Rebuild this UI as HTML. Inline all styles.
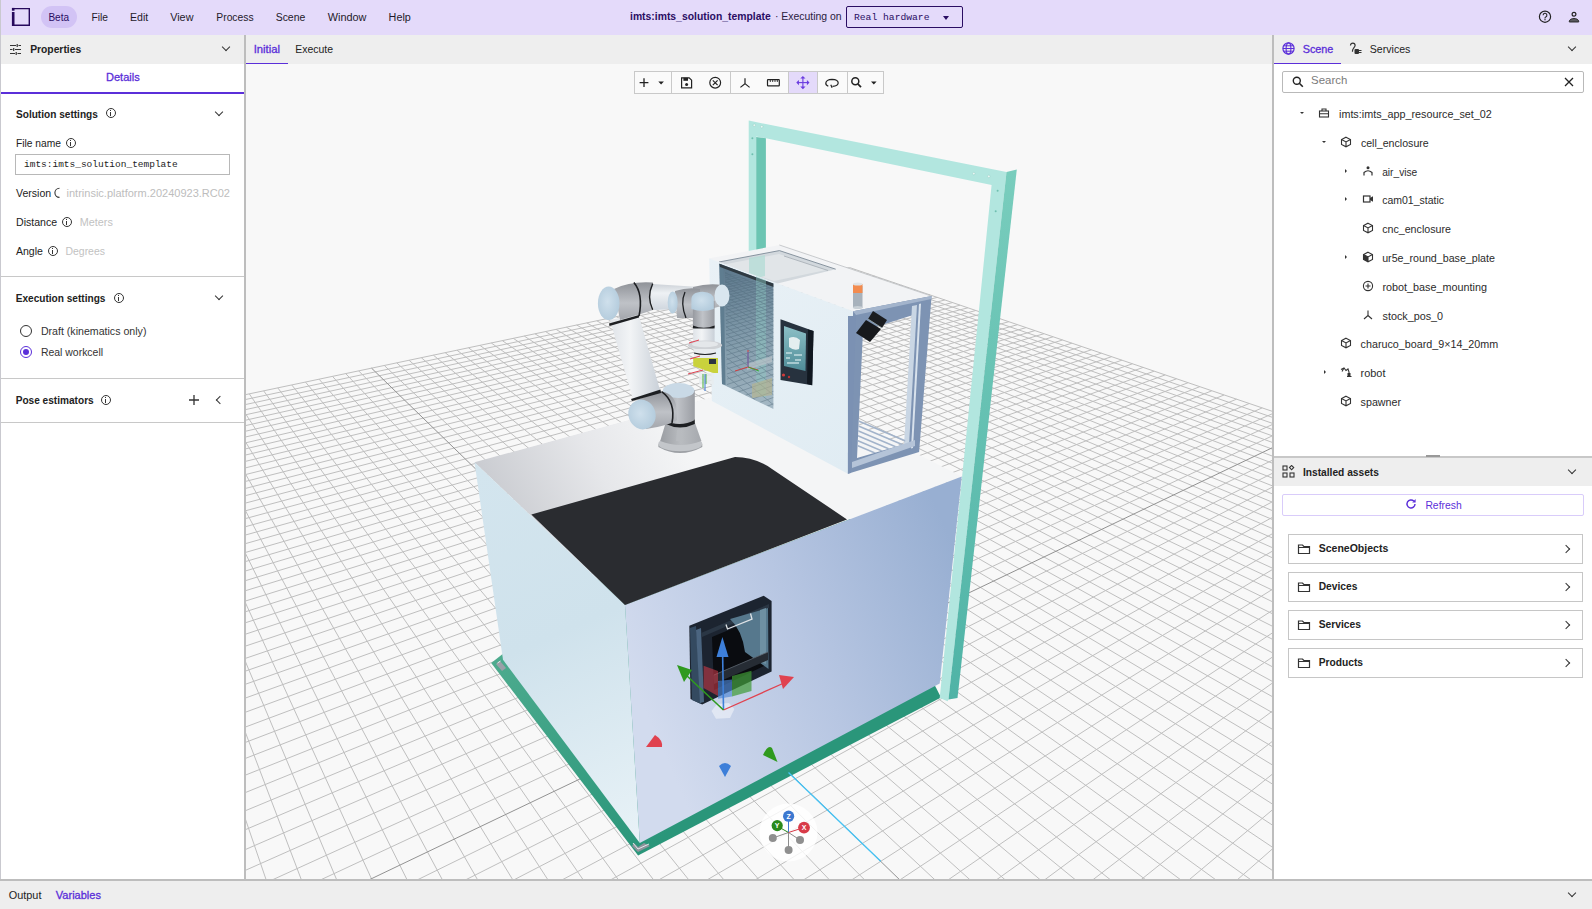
<!DOCTYPE html>
<html><head><meta charset="utf-8">
<style>
*{box-sizing:border-box;margin:0;padding:0}
html,body{width:1592px;height:909px;overflow:hidden;background:#fff;font-family:"Liberation Sans",sans-serif;color:#1f1f1f}
.a{position:absolute;white-space:nowrap}
#top{position:absolute;left:0;top:0;width:1592px;height:35px;background:#e4dafa}
.menu{font-size:10.6px;color:#1f1a2a;top:13px;line-height:10px}
#lp{position:absolute;left:0;top:35px;width:244px;height:844px;background:#fff}
.hdr{position:absolute;top:35px;height:29px;background:#eeeeee}
.vb{position:absolute;background:#bdbdbd}
.t11{font-size:10.6px;line-height:12px}
.b{font-weight:bold}
.pur{color:#5b2fd9}
.gray{color:#b9b9b9}
.info{position:absolute;width:10px;height:10px;border:1.1px solid #333;border-radius:50%}
.info:after{content:"";position:absolute;left:3.3px;top:3.2px;width:1.2px;height:3.6px;background:#333}
.info:before{content:"";position:absolute;left:3.3px;top:1.2px;width:1.2px;height:1.2px;background:#333}
.chev{position:absolute;width:6px;height:6px;border-right:1.5px solid #333;border-bottom:1.5px solid #333;transform:rotate(45deg)}
.hl{position:absolute;height:1px;background:#c8c8c8}
.tree{font-size:10.6px;color:#2b2b2b;line-height:12px}
.card{position:absolute;left:1288px;width:295px;height:30px;border:1px solid #c6c6c6;background:#fff}
.card .a{font-size:10.8px;font-weight:bold;color:#222;top:9px;left:29px;line-height:12px}
</style></head><body>

<!-- TOP BAR -->
<div id="top">
  <svg class="a" style="left:11px;top:7px" width="21" height="21" viewBox="0 0 21 21">
    <path d="M1.6 1.6H18.3V18.3H1.6" fill="none" stroke="#26095c" stroke-width="1.4"/>
    <rect x="0.9" y="0.9" width="2.6" height="2.8" fill="#26095c"/>
    <rect x="0.9" y="5" width="2.6" height="14" fill="#26095c"/>
  </svg>
  <div class="a" style="left:41px;top:6px;width:36px;height:22px;border-radius:11px;background:#d2c3f5"></div>

  <div class="a" style="left:846px;top:6px;width:117px;height:22px;border:1px solid #2a0d63;border-radius:2px"></div>
  <div class="a" style="left:943px;top:16px;width:0;height:0;border-left:3.5px solid transparent;border-right:3.5px solid transparent;border-top:4px solid #2a0d63"></div>

  <svg class="a" style="left:1537px;top:9px" width="16" height="16" viewBox="0 0 16 16">
    <circle cx="8" cy="7.7" r="5.6" fill="none" stroke="#222" stroke-width="1.2"/>
    <path d="M6.1 6.2a1.9 1.9 0 1 1 2.7 1.7c-.5.3-.8.6-.8 1.2v.3" fill="none" stroke="#222" stroke-width="1.1"/>
    <rect x="7.4" y="10.1" width="1.2" height="1.2" fill="#222"/>
  </svg>
  <svg class="a" style="left:1566px;top:9px" width="16" height="16" viewBox="0 0 16 16">
    <circle cx="8" cy="5.3" r="1.9" fill="none" stroke="#222" stroke-width="1.2"/>
    <path d="M3.3 13V12.3C3.3 10.6 6 9.4 8 9.4S12.7 10.6 12.7 12.3V13Z" fill="#5a5a5e" stroke="#222" stroke-width="0.9"/>
  </svg>
</div>

<!-- LEFT PANEL -->
<div id="lp"></div>
<div class="hdr" style="left:0;width:244px"></div>
<svg class="a" style="left:9px;top:43px" width="13" height="13" viewBox="0 0 13 13">
  <path d="M1 2.5h6M9.5 2.5h2.5M1 6.5h2.5M6 6.5h6M1 10.5h5M8.5 10.5h3.5" stroke="#333" stroke-width="1.2"/>
  <path d="M8.2 1v3M4.7 5v3M7.2 9v3" stroke="#333" stroke-width="1.2"/>
</svg>
<div class="chev" style="left:223px;top:44px"></div>

<div class="a" style="left:0;top:92px;width:244px;height:1.5px;background:#5b2fd9"></div>

<div class="info" style="left:106px;top:108px"></div>
<div class="chev" style="left:216px;top:109px"></div>

<div class="info" style="left:66px;top:138px"></div>
<div class="a" style="left:15px;top:154px;width:215px;height:21px;border:1px solid #b8b8b8;background:#fff"></div>

<div class="info" style="left:62px;top:217px"></div>
<div class="info" style="left:48px;top:246px"></div>

<div class="hl" style="left:0;top:276px;width:244px"></div>

<div class="info" style="left:114px;top:293px"></div>
<div class="chev" style="left:216px;top:293px"></div>

<div class="a" style="left:20px;top:325px;width:12px;height:12px;border:1.2px solid #333;border-radius:50%"></div>
<div class="a" style="left:20px;top:346px;width:12px;height:12px;border:1.2px solid #5b2fd9;border-radius:50%"></div>
<div class="a" style="left:23px;top:349px;width:6px;height:6px;background:#5b2fd9;border-radius:50%"></div>

<div class="hl" style="left:0;top:378px;width:244px"></div>
<div class="info" style="left:101px;top:395px"></div>
<svg class="a" style="left:188px;top:394px" width="12" height="12" viewBox="0 0 12 12"><path d="M6 1v10M1 6h10" stroke="#333" stroke-width="1.3"/></svg>
<div class="chev" style="left:217px;top:397px;transform:rotate(135deg)"></div>
<div class="hl" style="left:0;top:422px;width:244px"></div>

<div class="vb" style="left:244px;top:35px;width:2px;height:846px"></div>

<!-- VIEWPORT -->
<div class="hdr" style="left:246px;width:1026px"></div>
<div class="a" style="left:246px;top:63px;width:42px;height:1px;background:#5b2fd9"></div>

<div class="a" style="left:246px;top:64px;width:1026px;height:815px;background:#f8f8f8;overflow:hidden">
<svg width="1026" height="815" viewBox="246 64 1026 815" style="position:absolute;left:0;top:0">
<defs>
<linearGradient id="gTop" x1="490" y1="490" x2="660" y2="400" gradientUnits="userSpaceOnUse">
 <stop offset="0" stop-color="#caccd1"/><stop offset="0.55" stop-color="#e6e7ea"/><stop offset="1" stop-color="#f4f5f6"/></linearGradient>
<linearGradient id="gLeft" x1="480" y1="470" x2="640" y2="840" gradientUnits="userSpaceOnUse">
 <stop offset="0" stop-color="#d3e5ee"/><stop offset="0.45" stop-color="#cfe2ec"/><stop offset="1" stop-color="#e8f2f7"/></linearGradient>
<linearGradient id="gFront" x1="640" y1="700" x2="960" y2="560" gradientUnits="userSpaceOnUse">
 <stop offset="0" stop-color="#d2dbee"/><stop offset="0.5" stop-color="#b7c6e2"/><stop offset="1" stop-color="#98afd2"/></linearGradient>
<linearGradient id="gPlate" x1="490" y1="660" x2="640" y2="855" gradientUnits="userSpaceOnUse">
 <stop offset="0" stop-color="#4dab8e"/><stop offset="1" stop-color="#2a967a"/></linearGradient>
<linearGradient id="gPostR" x1="0" y1="170" x2="0" y2="700" gradientUnits="userSpaceOnUse">
 <stop offset="0" stop-color="#79cdbd"/><stop offset="1" stop-color="#4fb3a6"/></linearGradient>
<linearGradient id="gCncF" x1="710" y1="260" x2="850" y2="470" gradientUnits="userSpaceOnUse">
 <stop offset="0" stop-color="#e9f1f6"/><stop offset="1" stop-color="#e0ecf3"/></linearGradient>
<linearGradient id="gGray" x1="0" y1="0" x2="1" y2="1">
 <stop offset="0" stop-color="#a9abb0"/><stop offset="1" stop-color="#7e8085"/></linearGradient>
<linearGradient id="gGlass" x1="720" y1="270" x2="773" y2="400" gradientUnits="userSpaceOnUse">
 <stop offset="0" stop-color="#5d788c"/><stop offset="0.45" stop-color="#7e98a8"/><stop offset="1" stop-color="#a3b7c3"/></linearGradient>
<linearGradient id="gCylV" x1="0" y1="0" x2="1" y2="0">
 <stop offset="0" stop-color="#979aa0"/><stop offset="0.45" stop-color="#c0c3c8"/><stop offset="1" stop-color="#9a9da3"/></linearGradient>
<linearGradient id="gCylH" x1="0" y1="0" x2="0" y2="1">
 <stop offset="0" stop-color="#8f9298"/><stop offset="0.55" stop-color="#bfc2c7"/><stop offset="1" stop-color="#a3a6ac"/></linearGradient>
<linearGradient id="gBase" x1="0" y1="0" x2="1" y2="0">
 <stop offset="0" stop-color="#9a9da2"/><stop offset="0.5" stop-color="#b9bcc0"/><stop offset="1" stop-color="#a6a9ae"/></linearGradient>
<linearGradient id="gTube" x1="0" y1="0" x2="1" y2="0">
 <stop offset="0" stop-color="#dfe3e8"/><stop offset="0.4" stop-color="#f2f4f6"/><stop offset="1" stop-color="#c9d0d8"/></linearGradient>
<linearGradient id="gTube2" x1="0" y1="0" x2="0" y2="1">
 <stop offset="0" stop-color="#cdd2d8"/><stop offset="0.35" stop-color="#eef1f4"/><stop offset="1" stop-color="#cfd6de"/></linearGradient>
<radialGradient id="gCap" cx="0.45" cy="0.45" r="0.6">
 <stop offset="0" stop-color="#cfe0ec"/><stop offset="1" stop-color="#b3cbdc"/></radialGradient>
<linearGradient id="gScreen" x1="0" y1="0" x2="0" y2="1">
 <stop offset="0" stop-color="#8cbfc6"/><stop offset="1" stop-color="#4f8c98"/></linearGradient>
</defs>
<path d="M-22168.6 24763.8L-588.8 570.1M15809.2 24847.5L2799.3 930.7M-21211.9 24765.9L-560.2 564.1M14504.4 24844.6L2738.7 910.1M-20255.3 24768.0L-532.2 558.2M13199.6 24841.7L2680.7 890.4M-19298.6 24770.1L-504.7 552.4M11894.8 24838.8L2625.0 871.4M-18342.0 24772.2L-477.7 546.8M10590.0 24836.0L2571.6 853.2M-17385.3 24774.4L-451.3 541.2M9285.3 24833.1L2520.2 835.8M-16428.7 24776.5L-425.3 535.8M7980.5 24830.2L2470.8 819.0M-15472.0 24778.6L-399.9 530.4M6675.7 24827.4L2423.3 802.8M-14515.4 24780.7L-374.9 525.2M5370.9 24824.5L2377.6 787.3M-13558.7 24782.8L-350.4 520.0M4066.1 24821.6L2333.5 772.3M-12602.1 24784.9L-326.3 514.9M2761.3 24818.7L2291.0 757.8M-11645.4 24787.0L-302.7 510.0M1456.5 24815.9L2249.9 743.9M-10688.8 24789.1L-279.5 505.1M151.7 24813.0L2210.3 730.4M-9732.1 24791.2L-256.7 500.3M-1153.1 24810.1L2172.1 717.4M-8775.4 24793.3L-234.3 495.6M-2457.9 24807.2L2135.1 704.8M-7818.8 24795.4L-212.3 491.0M-3762.7 24804.4L2099.3 692.6M-6862.1 24797.5L-190.7 486.4M-5067.4 24801.5L2064.7 680.9M-5905.5 24799.6L-169.5 482.0M-6372.2 24798.6L2031.2 669.5M-4948.8 24801.7L-148.6 477.6M-7677.0 24795.7L1998.7 658.4M-3992.2 24803.9L-128.1 473.2M-8981.8 24792.9L1967.2 647.7M-3035.5 24806.0L-107.9 469.0M-10286.6 24790.0L1936.7 637.3M-2078.9 24808.1L-88.1 464.8M-11591.4 24787.1L1907.1 627.3M-1122.2 24810.2L-68.5 460.7M-12896.2 24784.2L1878.3 617.5M-165.6 24812.3L-49.3 456.7M-14201.0 24781.4L1850.4 608.0M791.1 24814.4L-30.5 452.7M-15505.8 24778.5L1823.3 598.8M1747.7 24816.5L-11.9 448.8M-16810.6 24775.6L1797.0 589.8M2704.4 24818.6L6.4 445.0M-18115.3 24772.7L1771.4 581.1M3661.0 24820.7L24.4 441.2M-19420.1 24769.9L1746.4 572.6M4617.7 24822.8L42.1 437.5M-20724.9 24767.0L1722.2 564.4M5574.3 24824.9L59.5 433.8M-22029.7 24764.1L1698.6 556.4M6531.0 24827.0L76.7 430.2M-14774.8 16474.5L1675.6 548.5M7487.6 24829.1L93.6 426.6M-10765.7 11979.7L1653.3 540.9M8444.3 24831.2L110.2 423.1M-8472.2 9408.5L1631.5 533.5M9400.9 24833.4L126.6 419.7M-6987.2 7743.6L1610.2 526.3M10357.6 24835.5L142.8 416.3M-5947.3 6577.7L1589.5 519.2M11314.2 24837.6L158.7 412.9M-5178.4 5715.6L1569.3 512.4M12270.9 24839.7L174.3 409.7M-4586.7 5052.3L1549.6 505.7M13227.5 24841.8L189.8 406.4M-4117.5 4526.2L1530.4 499.1M14184.2 24843.9L205.0 403.2M-3736.1 4098.7L1511.6 492.7M15140.8 24846.0L220.0 400.1M-3420.1 3744.4L1493.2 486.5M14315.0 22100.5L234.7 397.0M-3153.9 3446.0L1475.3 480.4M11086.4 16165.3L249.3 393.9M-2926.7 3191.2L1457.8 474.5M9223.3 12740.2L263.7 390.9M-2730.4 2971.2L1440.7 468.6M8010.6 10510.8L277.8 387.9M-2559.2 2779.2L1424.0 463.0M7158.3 8944.0L291.8 385.0M-2408.6 2610.3L1407.7 457.4M6526.5 7782.7L305.5 382.1M-2274.9 2460.5L1391.7 452.0M6039.5 6887.4L319.1 379.2M-2155.6 2326.7L1376.0 446.6M5652.7 6176.2L332.5 376.4M-2048.4 2206.6L1360.7 441.4M5337.9 5597.5L345.7 373.6M-1951.6 2098.0L1345.8 436.3M5076.8 5117.5L358.7 370.9M-1863.8 1999.5L1331.1 431.4M4668.7 4367.3L384.3 365.5M-1710.3 1827.4L1302.7 421.7M4506.2 4068.6L396.8 362.9M-1642.9 1751.9L1288.9 417.0M4364.4 3807.9L409.1 360.3M-1580.7 1682.2L1275.4 412.4M4239.5 3578.4L421.3 357.7M-1523.2 1617.7L1262.2 407.9M4128.8 3374.7L433.4 355.2M-1469.9 1557.9L1249.2 403.5M4029.8 3192.8L445.2 352.7M-1420.2 1502.3L1236.5 399.2M3940.9 3029.3L457.0 350.2M-1374.0 1450.4L1224.0 395.0M3860.6 2881.7L468.5 347.8M-1330.7 1401.9L1211.8 390.8M3787.6 2747.6L480.0 345.4M-1290.2 1356.5L1199.8 386.7M3721.1 2625.3L491.3 343.0M-1252.1 1313.8L1188.1 382.7M3660.2 2513.3L502.4 340.7M-1216.3 1273.7L1176.5 378.8M3604.2 2410.3L513.4 338.4M-1182.6 1235.9L1165.2 374.9M3552.5 2315.4L524.3 336.1M-1150.8 1200.2L1154.1 371.2M3504.8 2227.6L535.0 333.8M-1120.7 1166.4L1143.2 367.4M3460.4 2146.1L545.6 331.6M-1092.2 1134.5L1132.4 363.8M3419.2 2070.3L556.1 329.4M-1065.1 1104.2L1121.9 360.2M3380.7 1999.5L566.4 327.2M-1039.5 1075.4L1111.6 356.7M3344.7 1933.4L576.7 325.0M-1015.1 1048.0L1101.4 353.2M3311.0 1871.5L586.8 322.9M-991.9 1022.0L1091.4 349.8M3279.4 1813.3L596.8 320.8M-969.7 997.2L1081.6 346.5M3249.6 1758.6L606.6 318.7M-948.6 973.5L1071.9 343.2M3221.6 1707.0L616.4 316.7M-928.4 950.9L1062.5 340.0M3195.1 1658.3L626.0 314.7M-909.1 929.2L1053.1 336.8M3170.1 1612.3L635.5 312.7M-890.6 908.5L1044.0 333.7M3146.4 1568.7L645.0 310.7M-872.9 888.7L1035.0 330.6M3123.9 1527.4L654.3 308.7M-856.0 869.7L1026.1 327.6M3102.5 1488.1L663.5 306.8M-839.7 851.4L1017.4 324.7M3082.2 1450.8L672.6 304.9M-824.0 833.9L1008.8 321.7M3062.9 1415.3L681.6 303.0M-809.0 817.0L1000.3 318.9M3044.5 1381.4L690.5 301.1M-794.5 800.8L992.0 316.0M3026.9 1349.1L699.3 299.3M-780.6 785.2L983.8 313.3M3010.1 1318.2L708.0 297.4M-767.2 770.1L975.8 310.5M2994.0 1288.7L716.6 295.6M-754.2 755.6L967.9 307.8M2978.6 1260.4L725.1 293.8M-741.8 741.6L960.0 305.2M2963.9 1233.3L733.5 292.1M-729.7 728.1L952.4 302.6M2949.8 1207.3L741.9 290.3M-718.1 715.1L944.8 300.0M2936.2 1182.4L750.1 288.6M-706.8 702.5L937.3 297.4M2923.2 1158.5L758.2 286.9M-696.0 690.3L930.0 294.9M2910.7 1135.5L766.3 285.2M-685.4 678.5L922.7 292.5M2898.6 1113.3L774.3 283.5M-675.3 667.1L915.6 290.1M2887.0 1092.0L782.2 281.8M-665.4 656.0L908.6 287.7M2875.9 1071.4L790.0 280.2M-655.8 645.3L901.7 285.3M2865.1 1051.6L797.7 278.6M-646.6 634.9L894.8 283.0M2854.7 1032.5L805.4 277.0M-637.6 624.8L888.1 280.7M2844.7 1014.1L813.0 275.4M-628.8 615.0L881.5 278.5M2835.0 996.3L820.5 273.8M-620.4 605.5L874.9 276.2M2825.6 979.1L827.9 272.2M-612.1 596.3L868.5 274.0M2816.6 962.4L835.2 270.7M-604.1 587.3L862.1 271.9M2807.8 946.3L842.5 269.2M-596.4 578.6L855.9 269.7M2799.3 930.7L849.7 267.6M-588.8 570.1L849.7 267.6" stroke="#bfbfbf" stroke-width="1.0" fill="none"/><path d="M4856.7 4713.0L371.6 368.2M-1783.6 1909.7L1316.7 426.5" stroke="#929292" stroke-width="1.0" fill="none"/>
<polygon points="491.2,663.1 638.1,855.5 941,697.5 800,420" fill="url(#gPlate)"/>
<polygon points="474.5,462.3 772.7,380.7 961.8,476.6 625,605" fill="url(#gTop)"/>
<polygon points="474.5,462.3 625,605 639.8,843 503,659.8" fill="url(#gLeft)"/>
<polygon points="625,605 961.8,476.6 939.7,683.4 639.8,843" fill="url(#gFront)"/>
<path d="M496 664L500 661L506 668L502 671Z" fill="#9aa0a8"/><path d="M497.5 663L500.5 661" stroke="#e6e8ea" stroke-width="1"/>
<path d="M632 846L638 852L650 846L644 843L638 847L634 843Z" fill="#8e949c"/><path d="M633 843L638 849L649 844" stroke="#eef0f2" stroke-width="0.9" fill="none"/>
<path d="M531.3 514.5L625 605L847 519.4L772 469Q755 457 735 457Z" fill="#2a2c30"/>
<polygon points="748.7,120.6 1006.5,172 948.5,699.5 947.6,701.2 939.7,697.9 991.6,185.1 765.9,138.3 756.2,136.4 756.2,320 748.7,320" fill="#b2e6df"/>
<polygon points="1006.5,172 1016.8,169.6 957.5,698 948.5,699.5" fill="url(#gPostR)"/>
<polygon points="756.2,137 765.9,138.3 765.9,320 756.2,320" fill="#6cc5b3"/>
<g fill="#e9f6f3" stroke="#93cfc4" stroke-width="0.5"><circle cx="754.3" cy="125.2" r="1.3"/><circle cx="761.7" cy="126.7" r="1.3"/><circle cx="973.8" cy="173.6" r="1.3"/><circle cx="988.8" cy="176.4" r="1.3"/></g>
<g fill="#6fbfb0"><circle cx="997.6" cy="190.7" r="1"/><circle cx="995.7" cy="211.3" r="1"/><circle cx="752.4" cy="138.3" r="1"/><circle cx="752.4" cy="154.2" r="1"/></g>
<polygon points="708.5,258.6 779.4,245 931.6,296.1 853.1,311.3" fill="#f2f3f5"/>
<path d="M779.4 245L931.6 296.1" stroke="#b4b8bc" stroke-width="0.7"/>
<polygon points="719,262 779.4,250.6 835.7,269.2 774.4,284.2" fill="#d2d8dd"/>
<polygon points="724,264.5 779,254 826,270 774,281" fill="#e1e5e8"/>
<polygon points="749,258 765,255 765,276 749,280" fill="#b5dcd6" fill-opacity="0.8"/>
<path d="M719 262L779.4 250.6L835.7 269.2" stroke="#7d8a96" stroke-width="0.9" fill="none"/>
<path d="M784 256L828 270.5" stroke="#a3abb2" stroke-width="0.8" fill="none"/>
<polygon points="709.2,258.5 853.1,311.3 847.9,473.7 711.9,401" fill="url(#gCncF)"/>
<polygon points="719.4,263.8 773.4,283.6 773.4,409 722,383.9" fill="url(#gGlass)"/>
<polygon points="719.4,263.8 723.5,265.3 725.5,385 722,383.9" fill="#5f7d90"/>
<polygon points="719.4,263.8 773.4,283.6 773.4,287 720,267" fill="#2f3a42"/>
<polygon points="756,276 766,280 766,398 756,393" fill="#8fc9c4" fill-opacity="0.45"/>
<clipPath id="cWin"><polygon points="725,272 773.4,287 773.4,409 727,386"/></clipPath>
<g clip-path="url(#cWin)" opacity="0.55"><g transform="translate(395 95) scale(0.55)"><path d="M-22168.6 24763.8L-588.8 570.1M15809.2 24847.5L2799.3 930.7M-21211.9 24765.9L-560.2 564.1M14504.4 24844.6L2738.7 910.1M-20255.3 24768.0L-532.2 558.2M13199.6 24841.7L2680.7 890.4M-19298.6 24770.1L-504.7 552.4M11894.8 24838.8L2625.0 871.4M-18342.0 24772.2L-477.7 546.8M10590.0 24836.0L2571.6 853.2M-17385.3 24774.4L-451.3 541.2M9285.3 24833.1L2520.2 835.8M-16428.7 24776.5L-425.3 535.8M7980.5 24830.2L2470.8 819.0M-15472.0 24778.6L-399.9 530.4M6675.7 24827.4L2423.3 802.8M-14515.4 24780.7L-374.9 525.2M5370.9 24824.5L2377.6 787.3M-13558.7 24782.8L-350.4 520.0M4066.1 24821.6L2333.5 772.3M-12602.1 24784.9L-326.3 514.9M2761.3 24818.7L2291.0 757.8M-11645.4 24787.0L-302.7 510.0M1456.5 24815.9L2249.9 743.9M-10688.8 24789.1L-279.5 505.1M151.7 24813.0L2210.3 730.4M-9732.1 24791.2L-256.7 500.3M-1153.1 24810.1L2172.1 717.4M-8775.4 24793.3L-234.3 495.6M-2457.9 24807.2L2135.1 704.8M-7818.8 24795.4L-212.3 491.0M-3762.7 24804.4L2099.3 692.6M-6862.1 24797.5L-190.7 486.4M-5067.4 24801.5L2064.7 680.9M-5905.5 24799.6L-169.5 482.0M-6372.2 24798.6L2031.2 669.5M-4948.8 24801.7L-148.6 477.6M-7677.0 24795.7L1998.7 658.4M-3992.2 24803.9L-128.1 473.2M-8981.8 24792.9L1967.2 647.7M-3035.5 24806.0L-107.9 469.0M-10286.6 24790.0L1936.7 637.3M-2078.9 24808.1L-88.1 464.8M-11591.4 24787.1L1907.1 627.3M-1122.2 24810.2L-68.5 460.7M-12896.2 24784.2L1878.3 617.5M-165.6 24812.3L-49.3 456.7M-14201.0 24781.4L1850.4 608.0M791.1 24814.4L-30.5 452.7M-15505.8 24778.5L1823.3 598.8M1747.7 24816.5L-11.9 448.8M-16810.6 24775.6L1797.0 589.8M2704.4 24818.6L6.4 445.0M-18115.3 24772.7L1771.4 581.1M3661.0 24820.7L24.4 441.2M-19420.1 24769.9L1746.4 572.6M4617.7 24822.8L42.1 437.5M-20724.9 24767.0L1722.2 564.4M5574.3 24824.9L59.5 433.8M-22029.7 24764.1L1698.6 556.4M6531.0 24827.0L76.7 430.2M-14774.8 16474.5L1675.6 548.5M7487.6 24829.1L93.6 426.6M-10765.7 11979.7L1653.3 540.9M8444.3 24831.2L110.2 423.1M-8472.2 9408.5L1631.5 533.5M9400.9 24833.4L126.6 419.7M-6987.2 7743.6L1610.2 526.3M10357.6 24835.5L142.8 416.3M-5947.3 6577.7L1589.5 519.2M11314.2 24837.6L158.7 412.9M-5178.4 5715.6L1569.3 512.4M12270.9 24839.7L174.3 409.7M-4586.7 5052.3L1549.6 505.7M13227.5 24841.8L189.8 406.4M-4117.5 4526.2L1530.4 499.1M14184.2 24843.9L205.0 403.2M-3736.1 4098.7L1511.6 492.7M15140.8 24846.0L220.0 400.1M-3420.1 3744.4L1493.2 486.5M14315.0 22100.5L234.7 397.0M-3153.9 3446.0L1475.3 480.4M11086.4 16165.3L249.3 393.9M-2926.7 3191.2L1457.8 474.5M9223.3 12740.2L263.7 390.9M-2730.4 2971.2L1440.7 468.6M8010.6 10510.8L277.8 387.9M-2559.2 2779.2L1424.0 463.0M7158.3 8944.0L291.8 385.0M-2408.6 2610.3L1407.7 457.4M6526.5 7782.7L305.5 382.1M-2274.9 2460.5L1391.7 452.0M6039.5 6887.4L319.1 379.2M-2155.6 2326.7L1376.0 446.6M5652.7 6176.2L332.5 376.4M-2048.4 2206.6L1360.7 441.4M5337.9 5597.5L345.7 373.6M-1951.6 2098.0L1345.8 436.3M5076.8 5117.5L358.7 370.9M-1863.8 1999.5L1331.1 431.4M4668.7 4367.3L384.3 365.5M-1710.3 1827.4L1302.7 421.7M4506.2 4068.6L396.8 362.9M-1642.9 1751.9L1288.9 417.0M4364.4 3807.9L409.1 360.3M-1580.7 1682.2L1275.4 412.4M4239.5 3578.4L421.3 357.7M-1523.2 1617.7L1262.2 407.9M4128.8 3374.7L433.4 355.2M-1469.9 1557.9L1249.2 403.5M4029.8 3192.8L445.2 352.7M-1420.2 1502.3L1236.5 399.2M3940.9 3029.3L457.0 350.2M-1374.0 1450.4L1224.0 395.0M3860.6 2881.7L468.5 347.8M-1330.7 1401.9L1211.8 390.8M3787.6 2747.6L480.0 345.4M-1290.2 1356.5L1199.8 386.7M3721.1 2625.3L491.3 343.0M-1252.1 1313.8L1188.1 382.7M3660.2 2513.3L502.4 340.7M-1216.3 1273.7L1176.5 378.8M3604.2 2410.3L513.4 338.4M-1182.6 1235.9L1165.2 374.9M3552.5 2315.4L524.3 336.1M-1150.8 1200.2L1154.1 371.2M3504.8 2227.6L535.0 333.8M-1120.7 1166.4L1143.2 367.4M3460.4 2146.1L545.6 331.6M-1092.2 1134.5L1132.4 363.8M3419.2 2070.3L556.1 329.4M-1065.1 1104.2L1121.9 360.2M3380.7 1999.5L566.4 327.2M-1039.5 1075.4L1111.6 356.7M3344.7 1933.4L576.7 325.0M-1015.1 1048.0L1101.4 353.2M3311.0 1871.5L586.8 322.9M-991.9 1022.0L1091.4 349.8M3279.4 1813.3L596.8 320.8M-969.7 997.2L1081.6 346.5M3249.6 1758.6L606.6 318.7M-948.6 973.5L1071.9 343.2M3221.6 1707.0L616.4 316.7M-928.4 950.9L1062.5 340.0M3195.1 1658.3L626.0 314.7M-909.1 929.2L1053.1 336.8M3170.1 1612.3L635.5 312.7M-890.6 908.5L1044.0 333.7M3146.4 1568.7L645.0 310.7M-872.9 888.7L1035.0 330.6M3123.9 1527.4L654.3 308.7M-856.0 869.7L1026.1 327.6M3102.5 1488.1L663.5 306.8M-839.7 851.4L1017.4 324.7M3082.2 1450.8L672.6 304.9M-824.0 833.9L1008.8 321.7M3062.9 1415.3L681.6 303.0M-809.0 817.0L1000.3 318.9M3044.5 1381.4L690.5 301.1M-794.5 800.8L992.0 316.0M3026.9 1349.1L699.3 299.3M-780.6 785.2L983.8 313.3M3010.1 1318.2L708.0 297.4M-767.2 770.1L975.8 310.5M2994.0 1288.7L716.6 295.6M-754.2 755.6L967.9 307.8M2978.6 1260.4L725.1 293.8M-741.8 741.6L960.0 305.2M2963.9 1233.3L733.5 292.1M-729.7 728.1L952.4 302.6M2949.8 1207.3L741.9 290.3M-718.1 715.1L944.8 300.0M2936.2 1182.4L750.1 288.6M-706.8 702.5L937.3 297.4M2923.2 1158.5L758.2 286.9M-696.0 690.3L930.0 294.9M2910.7 1135.5L766.3 285.2M-685.4 678.5L922.7 292.5M2898.6 1113.3L774.3 283.5M-675.3 667.1L915.6 290.1M2887.0 1092.0L782.2 281.8M-665.4 656.0L908.6 287.7M2875.9 1071.4L790.0 280.2M-655.8 645.3L901.7 285.3M2865.1 1051.6L797.7 278.6M-646.6 634.9L894.8 283.0M2854.7 1032.5L805.4 277.0M-637.6 624.8L888.1 280.7M2844.7 1014.1L813.0 275.4M-628.8 615.0L881.5 278.5M2835.0 996.3L820.5 273.8M-620.4 605.5L874.9 276.2M2825.6 979.1L827.9 272.2M-612.1 596.3L868.5 274.0M2816.6 962.4L835.2 270.7M-604.1 587.3L862.1 271.9M2807.8 946.3L842.5 269.2M-596.4 578.6L855.9 269.7M2799.3 930.7L849.7 267.6M-588.8 570.1L849.7 267.6" stroke="#50697a" stroke-width="1.4" fill="none"/><path d="M4856.7 4713.0L371.6 368.2M-1783.6 1909.7L1316.7 426.5" stroke="#50697a" stroke-width="1.4" fill="none"/></g></g>
<polygon points="747,364 772,356 772,362 747,370" fill="#b9c3c9" fill-opacity="0.7"/>
<polygon points="752,384 772,378 772,395 752,398" fill="#b8b48a" fill-opacity="0.6"/>
<path d="M735 371L748 367M748 367L748 350M748 367L758 370" stroke-width="0.9" fill="none" stroke="#d33"/><path d="M748 367L748 352" stroke="#3a7bd5" stroke-width="0.9"/><path d="M748 367L759 371" stroke="#3a3" stroke-width="0.9"/>
<path d="M853.1 311.3L931.6 296.1L919.1 452L847.9 473.7Z M863 331L913 315L905 444L857 458Z" fill="#7d93b3" fill-rule="evenodd"/>
<polygon points="853.1,311.3 931.6,296.1 931.4,299 856,315" fill="#a3b4cc"/>
<polygon points="848,316 856,316 851,473 847.9,473.7" fill="#7b91b3"/>
<polygon points="912,306 917,305 909,445 904,446" fill="#c9d6e4"/>
<polygon points="919,304 921,303.5 913,448 911,448.5" fill="#d8e2ec"/>
<clipPath id="cOpen"><polygon points="863,331 913,315 905,444 857,458"/></clipPath>
<g clip-path="url(#cOpen)" stroke="#a2b3ca" stroke-width="1.5" fill="none"><path d="M856 420L908 442"/><path d="M856 425L908 447"/><path d="M856 430L908 452"/><path d="M856 435L908 457"/><path d="M856 440L908 462"/><path d="M856 445L908 467"/></g>
<polygon points="852,462 915,440 915,446 852,468" fill="#b5c4d8"/>
<polygon points="780.5,319.2 813.5,331.1 812.2,385.2 780.5,380" fill="#27323e"/>
<polygon points="808,329.5 813.5,331.1 812.2,385.2 807,384" fill="#111820"/>
<polygon points="784,326 806,333.5 805.5,371 784,366" fill="url(#gScreen)"/>
<path d="M789 338Q795 335 800 340L799 349Q794 351 789 347Z" fill="#e4eef0"/>
<path d="M786 353h6M794 355h8M786 358h4M795 360h6M787 363h12" stroke="#d9ebee" stroke-width="1.4" opacity="0.8"/>
<circle cx="783.5" cy="375" r="1.6" fill="#d23b3b"/><circle cx="789" cy="377" r="1.2" fill="#b33"/>
<polygon points="873,311 887,320 882,328 868,319" fill="#1b1d20"/>
<polygon points="866,320 881,329 870,342 856,333" fill="#17191c"/>
<path d="M868 319L882 328" stroke="#9aa" stroke-width="0.8"/>
<rect x="853" y="286" width="9.5" height="22" fill="#a8b2bc"/><ellipse cx="857.7" cy="307.5" rx="4.8" ry="1.5" fill="#c9d0d6"/><rect x="853" y="284" width="9.5" height="9" fill="#f28b4f"/><ellipse cx="857.7" cy="284" rx="4.8" ry="1.6" fill="#dfe3e6"/>
<g><path d="M658.4 444Q680 456 702.3 444L702.3 447Q680 459 658.4 447Z" fill="#9da0a5"/><ellipse cx="680.3" cy="443.8" rx="22" ry="7.5" fill="#c3c6ca"/><path d="M665.8 422.4L694.8 422.4L701.4 441Q680.3 449 660.2 441Z" fill="url(#gBase)"/><path d="M677 430L680 429L683 441L676 441Z" fill="#b8bbbf"/><path d="M665.8 419Q680 427 694.8 419L694.8 424Q680 431 665.8 424Z" fill="#1d1f22"/><path d="M663 390L694.8 390L694.8 420Q680 428 663 420Z" fill="url(#gCylV)"/><ellipse cx="678.6" cy="390.5" rx="15.8" ry="7.5" fill="#c9d9e6"/><path d="M610 320L638.5 314L660.5 392L633 399Z" fill="url(#gTube)"/><path d="M638 400L658.5 391Q673 392 676 405L677 420Q668 426 646 429Z" fill="url(#gCylH)"/><path d="M661.6 391.7Q676 402 672 423" stroke="#1d1f22" stroke-width="1.6" fill="none"/><ellipse cx="642" cy="414.5" rx="13.5" ry="15" transform="rotate(-20 642 414.5)" fill="url(#gCap)"/><path d="M631 399L660.5 389.5L661 393L632 401Z" fill="#1d1f22"/><path d="M614 289Q630 281 653 282.5Q647 297 653 310Q645 313 620 320Z" fill="url(#gCylH)"/><path d="M633.9 282.5Q643.5 294 639 316" stroke="#1d1f22" stroke-width="1.6" fill="none"/><path d="M652 284L700 287L700 308L654 310Q647 296 652 284Z" fill="url(#gTube2)"/><path d="M652.7 283.6Q646.5 297 652.7 309.7" stroke="#1d1f22" stroke-width="1.4" fill="none"/><ellipse cx="608.7" cy="303.3" rx="10.8" ry="16.8" fill="url(#gCap)"/><path d="M609 323.5L639 315L639 317.5L609.5 326Z" fill="#1d1f22"/><path d="M693 287Q708 283 722 285L722 306Q708 310 693 312Z" fill="url(#gCylH)"/><ellipse cx="722" cy="295.5" rx="7.5" ry="11" fill="#d9e6ef"/><path d="M675 291Q688 287 700 289L700 318L677 318Z" fill="url(#gCylH)"/><path d="M685 292Q680 303 686 318" stroke="#1d1f22" stroke-width="1.3" fill="none"/><ellipse cx="672.7" cy="302.5" rx="5" ry="11" fill="url(#gCap)"/><path d="M692.9 301L714.6 301L714.6 327Q704 331 692.9 327Z" fill="url(#gCylV)"/><path d="M692.9 325.5Q704 330 714.6 325.5L714.6 328.5Q704 333 692.9 328.5Z" fill="#1d1f22"/><path d="M691.4 300Q691 292 702.5 291.7Q713.8 292 713.8 300L713.8 309Q703 313 691.4 309Z" fill="url(#gCap)"/><rect x="693.2" y="328.5" width="21.4" height="15" fill="url(#gTube)"/><ellipse cx="705" cy="345.2" rx="17" ry="4.6" fill="#cfd2d6"/><ellipse cx="705" cy="344.2" rx="13" ry="3" fill="#e4e7ea"/><rect x="694" y="349" width="22" height="10" fill="#e8ebee"/><path d="M694 353Q705 356 716 353" stroke="#1d1f22" stroke-width="1.2" fill="none"/><polygon points="693.2,358 718,358 718,372.9 713,372.9 693.2,366" fill="#c9d23c"/><rect x="709" y="359" width="7" height="5" fill="#2c3440"/><rect x="699" y="372.9" width="14.8" height="11.5" fill="#e8ecef" fill-opacity="0.85"/><path d="M703 374V388M706 374V384" stroke="#4caf3a" stroke-width="1"/><path d="M705 374V391" stroke="#3a7bd5" stroke-width="1"/><path d="M688 374L703 370M690 359L700 356M689 343L699 340" stroke="#e04050" stroke-width="1"/></g>
<polygon points="689.3,625.8 763.7,595.7 771.6,601 771.6,671.5 702.2,704.5 690.5,699" fill="#1c2430"/>
<polygon points="690,628 696,626 701,704 692,700" fill="#344a60"/>
<polygon points="696,630 701,628 704,702 700,703" fill="#4b6580"/>
<polygon points="701,633 769,604 769,608 702,637" fill="#2a3644"/>
<polygon points="712,637 767,614 768,664 714,690" fill="#0a0c10"/>
<path d="M730 619L768 608L768.5 669L745 652Q742 630 730 619Z" fill="#56788d"/>
<path d="M760 610L766 608L766 664L760 662Z" fill="#6e90a3"/>
<polygon points="713,675 768,652 768,660 714,684" fill="#262c34"/>
<path d="M714 675L768 652" stroke="#5d6670" stroke-width="0.8"/>
<path d="M726 624.5L727.5 629L752 619L750.5 613.5" stroke="#dfe3e7" stroke-width="1.3" fill="none"/>
<polygon points="703.6,665.8 718,671 718,695.9 703.6,688" fill="#c63a48" fill-opacity="0.6"/>
<polygon points="732,676 751.5,670.8 751.5,691 732,696.6" fill="#3f9a35" fill-opacity="0.7"/>
<polygon points="718,681 732,679.4 732,696.6 718,698.7" fill="#4d86d6" fill-opacity="0.65"/>
<polygon points="717,704 729,703 734.4,709 730,718 716,718.8 711.5,711" fill="#ffffff" fill-opacity="0.45"/>
<path d="M723.5 710L722.6 652" stroke="#3d7fd9" stroke-width="1.6"/><path d="M716.5 657L722.4 637L728.5 657Z" fill="#3d7fd9"/>
<path d="M723.5 710L784 683" stroke="#e0424f" stroke-width="1.3"/><path d="M779 675L794 677L783 689Z" fill="#e0424f"/>
<path d="M723.5 710L686 675" stroke="#2f9a1e" stroke-width="1.6"/><path d="M677 665L692 670L684 682Z" fill="#2f9a1e"/>
<path d="M646 747L655 735Q663 740 662 747Z" fill="#e0424f"/>
<path d="M719 766Q725 760 731 766L725 777Z" fill="#3d7fd9"/>
<path d="M763 755Q768 744 772 748L777.5 762Z" fill="#2f9a1e"/>
<path d="M788.5 772.5L880.7 861.3" stroke="#45c3f5" stroke-width="1.3"/>
<circle cx="788.5" cy="832.5" r="29" fill="#ffffff" fill-opacity="0.8"/>
<g stroke="#8c8c8c" stroke-width="1"><path d="M788.5 832.5L772.8 838M788.5 832.5L800 840M788.5 832.5L788.5 850"/></g>
<path d="M788.5 832.5L788.5 820" stroke="#3c78d0" stroke-width="1"/><path d="M788.5 832.5L777 826" stroke="#2a8a1c" stroke-width="1"/><path d="M788.5 832.5L804 827.5" stroke="#d83a48" stroke-width="1"/>
<g fill="#8f8f8f"><circle cx="772.8" cy="838" r="4"/><circle cx="800" cy="840" r="4"/><circle cx="788.6" cy="850" r="4"/></g>
<circle cx="788.6" cy="816.2" r="5.6" fill="#3c78d0"/><circle cx="777.2" cy="825.6" r="5.6" fill="#2a8a1c"/><circle cx="804" cy="827.6" r="5.9" fill="#d83a48"/>
<g font-family="Liberation Sans" font-size="7" font-weight="bold" fill="#fff" text-anchor="middle"><text x="788.6" y="818.8">Z</text><text x="777.2" y="828.2">Y</text><text x="804" y="830.2">X</text></g>
</svg>
</div>

<!-- toolbar -->
<div class="a" style="left:634px;top:71px;width:250px;height:23px;border:1px solid #c9c9c9;background:#fafafa"></div>
<div class="a" style="left:671px;top:72px;width:1px;height:21px;background:#c9c9c9"></div>
<div class="a" style="left:730px;top:72px;width:1px;height:21px;background:#c9c9c9"></div>
<div class="a" style="left:788px;top:72px;width:1px;height:21px;background:#c9c9c9"></div>
<div class="a" style="left:817px;top:72px;width:1px;height:21px;background:#c9c9c9"></div>
<div class="a" style="left:847px;top:72px;width:1px;height:21px;background:#c9c9c9"></div>
<div class="a" style="left:789px;top:72px;width:28px;height:21px;background:#e4dafa"></div>
<svg class="a" style="left:634px;top:71px" width="250" height="23" viewBox="634 71 250 23">
<g stroke="#222" fill="none" stroke-width="1.3">
<path d="M644 78.3v8.8M639.6 82.7h8.8"/>
<path d="M681.6 77.8h7.6l2.4 2.4v7.6h-10z" stroke-width="1.2"/>
<circle cx="715.2" cy="82.7" r="5.4" stroke-width="1.2"/><path d="M712.8 80.3l4.8 4.8M717.6 80.3l-4.8 4.8" stroke-width="1.2"/>
<path d="M745 78.3v5.3l-4.6 3.8M745 83.6l4.6 3.8" stroke-width="1.2"/>
<rect x="767.5" y="79.6" width="11.8" height="6.2" rx="0.6" stroke-width="1.2"/><path d="M770.3 79.6v2.4M772.7 79.6v2.4M775 79.6v2.4M777.3 79.6v2.4" stroke-width="0.9"/>
<path d="M828.3 86.2Q825.6 85 825.8 83Q826.3 79.6 832 79.4Q838.2 79.6 838.2 83Q838 86 832.5 86.3" stroke-width="1.2"/><path d="M830.8 84.8l1.3 3" stroke-width="1.2"/>
<circle cx="855.3" cy="81.2" r="3.5" stroke-width="1.5"/><path d="M857.8 83.8l3.2 3.3" stroke-width="1.7"/>
</g>
<rect x="683.4" y="77.8" width="4.6" height="3" fill="#222"/><circle cx="686.6" cy="84.6" r="1.5" fill="#222"/>
<path d="M658.3 81.4h5.6l-2.8 3z M871 81.4h5.6l-2.8 3z" fill="#222"/>
<g fill="#6a3be0"><path d="M802.9 76l2.6 2.6h-5.2zM802.9 89.2l2.6-2.6h-5.2zM796.3 82.6l2.6-2.6v5.2zM809.5 82.6l-2.6-2.6v5.2z"/><rect x="802.35" y="78" width="1.1" height="9.4"/><rect x="798.2" y="82.05" width="9.4" height="1.1"/></g>
</svg>

<div class="vb" style="left:1272px;top:35px;width:2px;height:846px"></div>

<!-- RIGHT PANEL -->
<div class="a" style="left:1274px;top:35px;width:318px;height:844px;background:#fff"></div>
<div class="hdr" style="left:1274px;width:318px"></div>
<svg class="a" style="left:1282px;top:42px" width="13" height="13" viewBox="0 0 13 13">
  <circle cx="6.5" cy="6.5" r="5.6" fill="none" stroke="#5b2fd9" stroke-width="1.2"/>
  <ellipse cx="6.5" cy="6.5" rx="2.4" ry="5.6" fill="none" stroke="#5b2fd9" stroke-width="1.1"/>
  <path d="M1 6.5h11M1.8 3.8h9.4M1.8 9.2h9.4" stroke="#5b2fd9" stroke-width="1"/>
</svg>
<div class="a" style="left:1274px;top:63px;width:67px;height:1px;background:#5b2fd9"></div>
<svg class="a" style="left:1349px;top:42px" width="14" height="14" viewBox="0 0 14 14">
  <path d="M1.5 3.5c0-1.5 1-2.3 2.3-2.3s2.3.8 2.3 2.3-2.6 3-2.6 5.2v1" fill="none" stroke="#333" stroke-width="1.2"/>
  <rect x="5.5" y="7" width="4.5" height="5" rx="1" fill="#333"/>
  <path d="M10 8.5h2.5M10 10.5h2.5" stroke="#333" stroke-width="1"/>
</svg>
<div class="chev" style="left:1569px;top:44px"></div>

<div class="a" style="left:1282px;top:71px;width:302px;height:22px;border:1px solid #b9b9b9;border-radius:2px;background:#fff"></div>
<svg class="a" style="left:1292px;top:76px" width="12" height="12" viewBox="0 0 12 12"><circle cx="4.8" cy="4.8" r="3.5" fill="none" stroke="#222" stroke-width="1.4"/><path d="M7.3 7.3l3.5 3.5" stroke="#222" stroke-width="1.6"/></svg>
<svg class="a" style="left:1564px;top:77px" width="10" height="10" viewBox="0 0 10 10"><path d="M1 1l8 8M9 1l-8 8" stroke="#222" stroke-width="1.3"/></svg>

<div class="a" style="left:1299.5px;top:112px;width:0;height:0;border-left:2.5px solid transparent;border-right:2.5px solid transparent;border-top:2.6px solid #333"></div>
<svg class="a" style="left:1318px;top:107px" width="12" height="12" viewBox="0 0 12 12"><rect x="1.5" y="4" width="9" height="6" fill="none" stroke="#333" stroke-width="1.1"/><path d="M4 4V2h4v2M1.5 6.8h9" fill="none" stroke="#333" stroke-width="1.1"/></svg>
<div class="a" style="left:1321.5px;top:141px;width:0;height:0;border-left:2.5px solid transparent;border-right:2.5px solid transparent;border-top:2.6px solid #333"></div>
<svg class="a" style="left:1340px;top:136px" width="12" height="12" viewBox="0 0 12 12"><path d="M6 1.2L10.5 3.6V8.4L6 10.8L1.5 8.4V3.6Z M1.5 3.6L6 6L10.5 3.6 M6 6V10.8" fill="none" stroke="#333" stroke-width="1.1"/></svg>
<div class="a" style="left:1344.5px;top:168.5px;width:0;height:0;border-top:2.5px solid transparent;border-bottom:2.5px solid transparent;border-left:2.6px solid #333"></div>
<svg class="a" style="left:1362px;top:165px" width="12" height="12" viewBox="0 0 12 12"><circle cx="6" cy="2.8" r="1.5" fill="#333"/><path d="M2 10.5V7.5Q6 4 10 7.5V10.5" fill="none" stroke="#333" stroke-width="1.2"/></svg>
<div class="a" style="left:1344.5px;top:196.5px;width:0;height:0;border-top:2.5px solid transparent;border-bottom:2.5px solid transparent;border-left:2.6px solid #333"></div>
<svg class="a" style="left:1362px;top:193px" width="12" height="12" viewBox="0 0 12 12"><rect x="1.5" y="3" width="6.5" height="6" fill="none" stroke="#333" stroke-width="1.2"/><path d="M8 5L11 3.2V8.8L8 7Z" fill="#333"/></svg>
<svg class="a" style="left:1362px;top:222px" width="12" height="12" viewBox="0 0 12 12"><path d="M6 1.2L10.5 3.6V8.4L6 10.8L1.5 8.4V3.6Z M1.5 3.6L6 6L10.5 3.6 M6 6V10.8" fill="none" stroke="#333" stroke-width="1.1"/></svg>
<div class="a" style="left:1344.5px;top:254.5px;width:0;height:0;border-top:2.5px solid transparent;border-bottom:2.5px solid transparent;border-left:2.6px solid #333"></div>
<svg class="a" style="left:1362px;top:251px" width="12" height="12" viewBox="0 0 12 12"><path d="M6 1.2L10.5 3.6V8.4L6 10.8L1.5 8.4V3.6Z M1.5 3.6L6 6L10.5 3.6 M6 6V10.8" fill="none" stroke="#333" stroke-width="1.1"/><path d="M1.5 3.6L6 6V10.8L1.5 8.4Z" fill="#333"/></svg>
<svg class="a" style="left:1362px;top:280px" width="12" height="12" viewBox="0 0 12 12"><circle cx="6" cy="6" r="4.6" fill="none" stroke="#333" stroke-width="1.1"/><path d="M6 3.5v5M3.5 6h5" stroke="#333" stroke-width="1.1"/></svg>
<svg class="a" style="left:1362px;top:309px" width="12" height="12" viewBox="0 0 12 12"><path d="M6 1.5V6.5L2 10M6 6.5L10 10" fill="none" stroke="#333" stroke-width="1.1"/></svg>
<svg class="a" style="left:1340px;top:337px" width="12" height="12" viewBox="0 0 12 12"><path d="M6 1.2L10.5 3.6V8.4L6 10.8L1.5 8.4V3.6Z M1.5 3.6L6 6L10.5 3.6 M6 6V10.8" fill="none" stroke="#333" stroke-width="1.1"/></svg>
<div class="a" style="left:1323.5px;top:369.5px;width:0;height:0;border-top:2.5px solid transparent;border-bottom:2.5px solid transparent;border-left:2.6px solid #333"></div>
<svg class="a" style="left:1340px;top:366px" width="12" height="12" viewBox="0 0 12 12"><path d="M1 3.5L4 2L6 4.5L8 3L9 6L9 9.5M7 10.5h4.5M2 5.5L4 2" fill="none" stroke="#333" stroke-width="1.1"/><rect x="7.5" y="7" width="3" height="3" fill="#333"/></svg>
<svg class="a" style="left:1340px;top:395px" width="12" height="12" viewBox="0 0 12 12"><path d="M6 1.2L10.5 3.6V8.4L6 10.8L1.5 8.4V3.6Z M1.5 3.6L6 6L10.5 3.6 M6 6V10.8" fill="none" stroke="#333" stroke-width="1.1"/></svg>

<div class="hl" style="left:1274px;top:456px;width:318px;height:2px;background:#c8c8c8"></div>
<div class="a" style="left:1426px;top:455px;width:14px;height:2px;background:#999"></div>
<div class="a" style="left:1274px;top:458px;width:318px;height:28px;background:#eeeeee"></div>
<svg class="a" style="left:1282px;top:465px" width="13" height="13" viewBox="0 0 13 13">
  <rect x="1" y="1" width="4" height="4" fill="none" stroke="#333" stroke-width="1.1"/>
  <rect x="1" y="8" width="4" height="4" fill="none" stroke="#333" stroke-width="1.1"/>
  <rect x="8" y="8" width="4" height="4" fill="none" stroke="#333" stroke-width="1.1"/>
  <rect x="8.1" y="1.1" width="3" height="3" transform="rotate(45 9.6 2.6)" fill="none" stroke="#333" stroke-width="1.1"/>
</svg>
<div class="chev" style="left:1569px;top:467px"></div>

<div class="a" style="left:1282px;top:494px;width:302px;height:22px;border:1px solid #d9ccfa;border-radius:2px;background:#fff"></div>
<svg class="a" style="left:1405px;top:498px" width="12" height="12" viewBox="0 0 12 12"><path d="M10 6a4 4 0 1 1-1.2-2.9" fill="none" stroke="#5b2fd9" stroke-width="1.4"/><path d="M10.6 1v3.4H7.2z" fill="#5b2fd9"/></svg>

<div class="card" style="top:534px"></div>
<div class="card" style="top:572px"></div>
<div class="card" style="top:610px"></div>
<div class="card" style="top:648px"></div>
<svg class="a" style="left:1297px;top:542px" width="14" height="14" viewBox="0 0 14 14"><path d="M1.5 3h4l1.3 1.5H12.5V11.5H1.5Z" fill="none" stroke="#333" stroke-width="1.2"/><path d="M1.5 5.5H12.5" stroke="#333" stroke-width="1"/></svg>
<div class="chev" style="left:1563px;top:546px;transform:rotate(-45deg)"></div>
<svg class="a" style="left:1297px;top:580px" width="14" height="14" viewBox="0 0 14 14"><path d="M1.5 3h4l1.3 1.5H12.5V11.5H1.5Z" fill="none" stroke="#333" stroke-width="1.2"/><path d="M1.5 5.5H12.5" stroke="#333" stroke-width="1"/></svg>
<div class="chev" style="left:1563px;top:584px;transform:rotate(-45deg)"></div>
<svg class="a" style="left:1297px;top:618px" width="14" height="14" viewBox="0 0 14 14"><path d="M1.5 3h4l1.3 1.5H12.5V11.5H1.5Z" fill="none" stroke="#333" stroke-width="1.2"/><path d="M1.5 5.5H12.5" stroke="#333" stroke-width="1"/></svg>
<div class="chev" style="left:1563px;top:622px;transform:rotate(-45deg)"></div>
<svg class="a" style="left:1297px;top:656px" width="14" height="14" viewBox="0 0 14 14"><path d="M1.5 3h4l1.3 1.5H12.5V11.5H1.5Z" fill="none" stroke="#333" stroke-width="1.2"/><path d="M1.5 5.5H12.5" stroke="#333" stroke-width="1"/></svg>
<div class="chev" style="left:1563px;top:660px;transform:rotate(-45deg)"></div>

<!-- BOTTOM BAR -->
<div class="a" style="left:0;top:0;width:1px;height:909px;background:#c9c9cf"></div>
<div class="vb" style="left:0;top:879px;width:1592px;height:2px"></div>
<div class="a" style="left:0;top:881px;width:1592px;height:28px;background:#eeeeee"></div>
<div class="chev" style="left:1569px;top:890px"></div>

<svg class="a" style="left:54px;top:187px" width="8" height="12" viewBox="0 0 8 12"><path d="M5.5 1.2A4.6 4.6 0 0 0 5.5 10.4" fill="none" stroke="#333" stroke-width="1.1"/></svg>
<div class="a" style="left:48.4px;top:12px;font-family:'Liberation Sans',sans-serif;font-weight:normal;font-size:10.06px;line-height:11px;color:#2a0d63">Beta</div>
<div class="a" style="left:91.5px;top:12px;font-family:'Liberation Sans',sans-serif;font-weight:normal;font-size:10.24px;line-height:11px;color:#1f1a2a">File</div>
<div class="a" style="left:130.0px;top:11px;font-family:'Liberation Sans',sans-serif;font-weight:normal;font-size:10.56px;line-height:12px;color:#1f1a2a">Edit</div>
<div class="a" style="left:170.2px;top:11px;font-family:'Liberation Sans',sans-serif;font-weight:normal;font-size:10.84px;line-height:12px;color:#1f1a2a">View</div>
<div class="a" style="left:216.3px;top:12px;font-family:'Liberation Sans',sans-serif;font-weight:normal;font-size:10.33px;line-height:11px;color:#1f1a2a">Process</div>
<div class="a" style="left:275.7px;top:12px;font-family:'Liberation Sans',sans-serif;font-weight:normal;font-size:10.44px;line-height:11px;color:#1f1a2a">Scene</div>
<div class="a" style="left:327.8px;top:11px;font-family:'Liberation Sans',sans-serif;font-weight:normal;font-size:10.88px;line-height:12px;color:#1f1a2a">Window</div>
<div class="a" style="left:388.6px;top:11px;font-family:'Liberation Sans',sans-serif;font-weight:normal;font-size:10.79px;line-height:12px;color:#1f1a2a">Help</div>
<div class="a" style="left:630.0px;top:11px;font-family:'Liberation Sans',sans-serif;font-weight:bold;font-size:10.38px;line-height:11px;color:#2a0d63">imts:imts_solution_template</div>
<div class="a" style="left:775.0px;top:11px;font-family:'Liberation Sans',sans-serif;font-weight:normal;font-size:10.43px;line-height:11px;color:#2a2040">· Executing on</div>
<div class="a" style="left:854.0px;top:12px;font-family:'Liberation Mono',monospace;font-weight:normal;font-size:9.69px;line-height:11px;color:#2a0d63">Real hardware</div>
<div class="a" style="left:30.2px;top:44px;font-family:'Liberation Sans',sans-serif;font-weight:bold;font-size:10.31px;line-height:11px;color:#222">Properties</div>
<div class="a" style="left:253.7px;top:43px;font-family:'Liberation Sans',sans-serif;font-weight:normal;font-size:11.31px;line-height:12px;color:#5b2fd9;-webkit-text-stroke:0.3px #5b2fd9">Initial</div>
<div class="a" style="left:295.2px;top:44px;font-family:'Liberation Sans',sans-serif;font-weight:normal;font-size:10.46px;line-height:11px;color:#222">Execute</div>
<div class="a" style="left:1302.7px;top:43px;font-family:'Liberation Sans',sans-serif;font-weight:normal;font-size:10.83px;line-height:12px;color:#5b2fd9;-webkit-text-stroke:0.3px #5b2fd9">Scene</div>
<div class="a" style="left:1369.8px;top:43px;font-family:'Liberation Sans',sans-serif;font-weight:normal;font-size:10.59px;line-height:12px;color:#222">Services</div>
<div class="a" style="left:106.0px;top:71px;font-family:'Liberation Sans',sans-serif;font-weight:normal;font-size:11.03px;line-height:12px;color:#5b2fd9;-webkit-text-stroke:0.3px #5b2fd9">Details</div>
<div class="a" style="left:16.0px;top:109px;font-family:'Liberation Sans',sans-serif;font-weight:bold;font-size:10.10px;line-height:11px;color:#222">Solution settings</div>
<div class="a" style="left:16.0px;top:138px;font-family:'Liberation Sans',sans-serif;font-weight:normal;font-size:10.25px;line-height:11px;color:#222">File name</div>
<div class="a" style="left:24.0px;top:159px;font-family:'Liberation Mono',monospace;font-weight:normal;font-size:9.49px;line-height:11px;color:#222">imts:imts_solution_template</div>
<div class="a" style="left:16.0px;top:187px;font-family:'Liberation Sans',sans-serif;font-weight:normal;font-size:10.55px;line-height:12px;color:#222">Version</div>
<div class="a" style="left:66.5px;top:187px;font-family:'Liberation Sans',sans-serif;font-weight:normal;font-size:11.02px;line-height:12px;color:#bdbdbd">intrinsic.platform.20240923.RC02</div>
<div class="a" style="left:16.0px;top:216px;font-family:'Liberation Sans',sans-serif;font-weight:normal;font-size:10.59px;line-height:12px;color:#222">Distance</div>
<div class="a" style="left:79.8px;top:216px;font-family:'Liberation Sans',sans-serif;font-weight:normal;font-size:10.80px;line-height:12px;color:#c2c2c2">Meters</div>
<div class="a" style="left:16.0px;top:245px;font-family:'Liberation Sans',sans-serif;font-weight:normal;font-size:10.52px;line-height:12px;color:#222">Angle</div>
<div class="a" style="left:65.5px;top:246px;font-family:'Liberation Sans',sans-serif;font-weight:normal;font-size:10.45px;line-height:11px;color:#c2c2c2">Degrees</div>
<div class="a" style="left:15.7px;top:293px;font-family:'Liberation Sans',sans-serif;font-weight:bold;font-size:10.11px;line-height:11px;color:#222">Execution settings</div>
<div class="a" style="left:40.9px;top:325px;font-family:'Liberation Sans',sans-serif;font-weight:normal;font-size:10.62px;line-height:12px;color:#333">Draft (kinematics only)</div>
<div class="a" style="left:40.9px;top:347px;font-family:'Liberation Sans',sans-serif;font-weight:normal;font-size:10.46px;line-height:11px;color:#333">Real workcell</div>
<div class="a" style="left:15.7px;top:395px;font-family:'Liberation Sans',sans-serif;font-weight:bold;font-size:10.10px;line-height:11px;color:#222">Pose estimators</div>
<div class="a" style="left:1311.1px;top:74px;font-family:'Liberation Sans',sans-serif;font-weight:normal;font-size:11.43px;line-height:12px;color:#7a7a7a">Search</div>
<div class="a" style="left:1339.0px;top:108px;font-family:'Liberation Sans',sans-serif;font-weight:normal;font-size:10.79px;line-height:12px;color:#2b2b2b">imts:imts_app_resource_set_02</div>
<div class="a" style="left:1360.9px;top:137px;font-family:'Liberation Sans',sans-serif;font-weight:normal;font-size:10.62px;line-height:12px;color:#2b2b2b">cell_enclosure</div>
<div class="a" style="left:1382.2px;top:167px;font-family:'Liberation Sans',sans-serif;font-weight:normal;font-size:10.19px;line-height:11px;color:#2b2b2b">air_vise</div>
<div class="a" style="left:1382.2px;top:195px;font-family:'Liberation Sans',sans-serif;font-weight:normal;font-size:10.49px;line-height:11px;color:#2b2b2b">cam01_static</div>
<div class="a" style="left:1382.2px;top:223px;font-family:'Liberation Sans',sans-serif;font-weight:normal;font-size:10.67px;line-height:12px;color:#2b2b2b">cnc_enclosure</div>
<div class="a" style="left:1382.2px;top:252px;font-family:'Liberation Sans',sans-serif;font-weight:normal;font-size:10.68px;line-height:12px;color:#2b2b2b">ur5e_round_base_plate</div>
<div class="a" style="left:1382.5px;top:281px;font-family:'Liberation Sans',sans-serif;font-weight:normal;font-size:10.81px;line-height:12px;color:#2b2b2b">robot_base_mounting</div>
<div class="a" style="left:1382.5px;top:310px;font-family:'Liberation Sans',sans-serif;font-weight:normal;font-size:10.81px;line-height:12px;color:#2b2b2b">stock_pos_0</div>
<div class="a" style="left:1360.6px;top:338px;font-family:'Liberation Sans',sans-serif;font-weight:normal;font-size:10.74px;line-height:12px;color:#2b2b2b">charuco_board_9×14_20mm</div>
<div class="a" style="left:1360.6px;top:367px;font-family:'Liberation Sans',sans-serif;font-weight:normal;font-size:10.92px;line-height:12px;color:#2b2b2b">robot</div>
<div class="a" style="left:1360.6px;top:396px;font-family:'Liberation Sans',sans-serif;font-weight:normal;font-size:10.69px;line-height:12px;color:#2b2b2b">spawner</div>
<div class="a" style="left:1303.0px;top:467px;font-family:'Liberation Sans',sans-serif;font-weight:bold;font-size:10.20px;line-height:11px;color:#222">Installed assets</div>
<div class="a" style="left:1425.4px;top:500px;font-family:'Liberation Sans',sans-serif;font-weight:normal;font-size:10.37px;line-height:11px;color:#5b2fd9">Refresh</div>
<div class="a" style="left:1318.7px;top:542px;font-family:'Liberation Sans',sans-serif;font-weight:bold;font-size:10.52px;line-height:12px;color:#222">SceneObjects</div>
<div class="a" style="left:1318.7px;top:581px;font-family:'Liberation Sans',sans-serif;font-weight:bold;font-size:10.26px;line-height:11px;color:#222">Devices</div>
<div class="a" style="left:1318.7px;top:619px;font-family:'Liberation Sans',sans-serif;font-weight:bold;font-size:10.28px;line-height:11px;color:#222">Services</div>
<div class="a" style="left:1318.7px;top:657px;font-family:'Liberation Sans',sans-serif;font-weight:bold;font-size:10.22px;line-height:11px;color:#222">Products</div>
<div class="a" style="left:8.8px;top:889px;font-family:'Liberation Sans',sans-serif;font-weight:normal;font-size:10.89px;line-height:12px;color:#222">Output</div>
<div class="a" style="left:55.8px;top:889px;font-family:'Liberation Sans',sans-serif;font-weight:normal;font-size:11.04px;line-height:12px;color:#5b2fd9;-webkit-text-stroke:0.3px #5b2fd9">Variables</div>
</body></html>
